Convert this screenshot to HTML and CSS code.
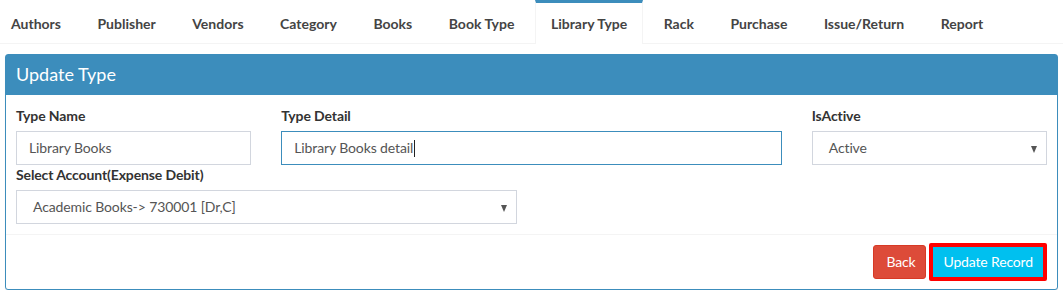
FILE: index.html
```html
<!DOCTYPE html>
<html>
<head>
<meta charset="utf-8">
<link rel="stylesheet" href="styles.css">
</head>
<body>
<ul class="tabs">
  <li class="tab">Authors</li>
  <li class="tab">Publisher</li>
  <li class="tab">Vendors</li>
  <li class="tab">Category</li>
  <li class="tab">Books</li>
  <li class="tab">Book Type</li>
  <li class="tab active">Library Type</li>
  <li class="tab">Rack</li>
  <li class="tab">Purchase</li>
  <li class="tab">Issue/Return</li>
  <li class="tab">Report</li>
</ul>
<div class="panel">
  <div class="panel-header">Update Type</div>
  <div class="panel-body">
    <div class="row">
      <div class="col col-3">
        <label class="label">Type Name</label>
        <div class="control">Library Books</div>
      </div>
      <div class="col col-6">
        <label class="label">Type Detail</label>
        <div class="control focus">Library Books detail<span class="caret"></span></div>
      </div>
      <div class="col col-3">
        <label class="label">IsActive</label>
        <div class="control select">Active</div>
      </div>
    </div>
    <div class="row">
      <div class="col col-6">
        <label class="label">Select Account(Expense Debit)</label>
        <div class="control select">Academic Books-&gt; 730001 [Dr,C]</div>
      </div>
    </div>
  </div>
  <div class="panel-footer">
    <button class="btn btn-back">Back</button>
    <button class="btn btn-update">Update Record</button>
  </div>
</div>
</body>
</html>
```
FILE: styles.css
```css
* { box-sizing: border-box; }
body {
  margin: 0;
  background: #fff;
  font-family: "Lato", "Liberation Sans", sans-serif;
  font-size: 14px;
  color: #333;
  letter-spacing: -0.12px;
}
.tabs {
  list-style: none;
  margin: 0;
  padding: 0;
  display: flex;
  border-bottom: 1px solid #f4f4f4;
  height: 44px;
}
.tab {
  padding: 11px 15px 9px;
  margin-right: 4.5px;
  line-height: 20px;
  font-weight: 700;
  color: #444;
  letter-spacing: 0;
  border-top: 3px solid transparent;
  border-left: 1px solid transparent;
  border-right: 1px solid transparent;
  height: 44px;
}
.tab:first-child { padding-left: 10px; }
.tab.active {
  border-top-color: #3c8dbc;
  border-left-color: #f4f4f4;
  border-right-color: #f4f4f4;
  background: #fff;
}
.panel {
  margin: 10px 5px 0 5px;
  border: 1px solid #3c8dbc;
  border-radius: 3px;
  background: #fff;
  box-shadow: 0 1px 1px rgba(0,0,0,0.1);
}
.panel-header {
  background: #3c8dbc;
  color: #fff;
  font-size: 18px;
  line-height: 20px;
  padding: 9px 10px 11px;
  letter-spacing: 0;
}
.panel-body {
  padding: 11px 10px 10px;
}
.row {
  display: flex;
  margin: 0 -15px;
}
.col { padding: 0 15px; }
.col-3 { flex: 0 0 25%; }
.col-6 { flex: 0 0 50%; }
.label {
  display: block;
  font-weight: 700;
  line-height: 20px;
  margin: 0 0 5px;
  color: #333;
}
.control {
  height: 34px;
  border: 1px solid #d2d6de;
  padding: 6px 12px;
  line-height: 20px;
  color: #555;
  display: flex;
  align-items: center;
}
.control.focus { border-color: #3c8dbc; }
.caret {
  display: inline-block;
  width: 1px;
  height: 17px;
  background: #222;
  margin-left: 1px;
}
.control.select {
  padding-left: 16px;
  position: relative;
}
.control.select::after {
  content: "";
  position: absolute;
  right: 9px;
  top: 14px;
  border-left: 3.5px solid transparent;
  border-right: 3.5px solid transparent;
  border-top: 7px solid #555;
}
.panel-footer {
  border-top: 1px solid #f4f4f4;
  padding: 10px;
  display: flex;
  justify-content: flex-end;
  align-items: center;
  gap: 3px;
}
.btn {
  font-family: inherit;
  font-size: 14px;
  line-height: 20px;
  color: #fff;
  padding: 6px 12px;
  border-radius: 3px;
  border: 1px solid transparent;
  letter-spacing: -0.15px;
}
.btn-back {
  background: #dd4b39;
  border-color: #d73925;
  height: 34px;
  width: 53px;
}
.btn-update {
  background: #00c0ef;
  border: 4px solid #ff0000;
  border-radius: 2px;
  height: 38px;
  margin: -2px 0;
  padding: 4px 10px;
}
```
